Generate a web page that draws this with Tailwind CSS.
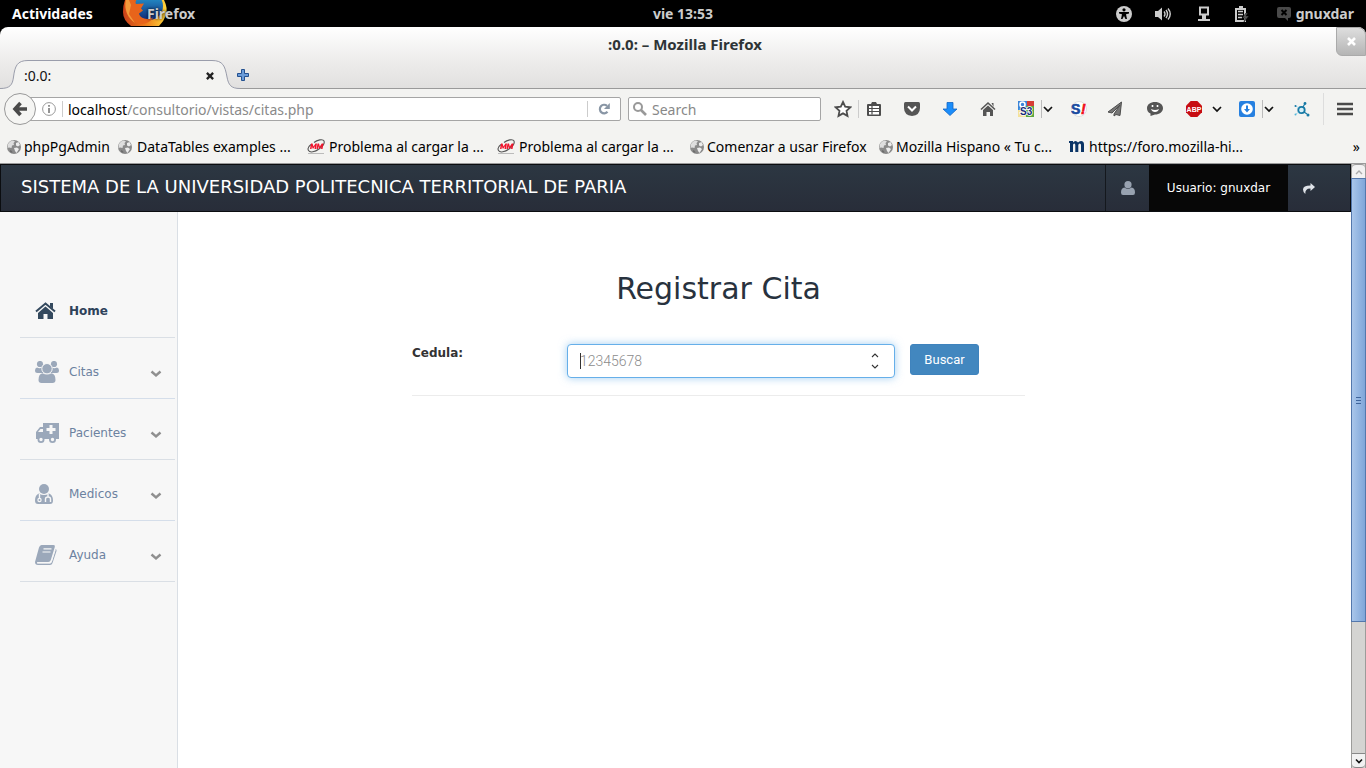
<!DOCTYPE html>
<html lang="es">
<head>
<meta charset="utf-8">
<meta name="viewport" content="width=device-width, initial-scale=1">
<title>:0.0:</title>
<script src="https://cdn.jsdelivr.net/npm/@tailwindcss/browser@4"></script>
</head>
<body class="flex h-screen flex-col overflow-hidden bg-black font-['Noto_Sans',sans-serif]">

<!-- Shared symbols -->
<svg class="hidden" aria-hidden="true">
  <symbol id="globe" viewBox="0 0 16 16"><circle cx="8" cy="8" r="7" fill="#8a8a8a"/><path d="M2 5 4 2.500 7 1.500l2 1L7.500 4 8 6 6 6.500 5.500 9 3 8.500 1.500 9Z" fill="#dedede"/><path d="m10 4 2.500-1 1.500 3-2 1.500-2-1ZM8 9l3-.5L13 10l-2.500 4L9 12Z" fill="#ececec"/><path d="M4 11l2 1 .5 2L4 13Z" fill="#6d6d6d"/></symbol>
  <symbol id="mm" viewBox="0 0 18 16"><path d="M7 3.500c3-2.500 9-4 10-1.500s-1 5-5 8-9 4-10.500 1.500S2 7 4 5.500" fill="none" stroke="#555" stroke-width="1.100"/><path d="m3 10 1-5.500h1.500l1 3 2-3H10L9 10H7.500L8 7 6.500 9.500h-1L5 7l-.5 3ZM9.500 10l1-5.500H12l.8 3 2-3h1.700l-1 5.500H14l.6-3-1.600 2.500h-1L11.500 7 11 10Z" fill="#f0142c"/><path d="M1 14.500h16" stroke="#bbb"/></symbol>
  <symbol id="chev" viewBox="0 0 10 10"><path d="m1 3 4 4 4-4" fill="none" stroke="currentColor" stroke-width="1.700"/></symbol>
  <symbol id="menuchev" viewBox="0 0 12 10"><path d="m1.500 2.500 4.500 4 4.500-4" fill="none" stroke="#8f8f8f" stroke-width="2.400"/></symbol>
</svg>

<!-- Desktop panel -->
<header class="grid h-[27px] shrink-0 grid-cols-[1fr_auto_1fr] items-center overflow-hidden bg-black text-sm leading-[27px] font-bold text-[#ccc]">
  <div class="flex items-center">
    <button class="w-[122px] pl-3 text-left text-white">Actividades</button>
    <div class="relative flex h-[27px] items-center overflow-hidden">
      <svg class="h-[27px] w-[46px]" viewBox="0 0 46 27" aria-hidden="true">
        <defs>
          <linearGradient id="fx" x1="0" y1="0" x2="1" y2="0"><stop offset="0" stop-color="#c9401a"/><stop offset=".5" stop-color="#ee7a1c"/><stop offset="1" stop-color="#ffd83a"/></linearGradient>
          <linearGradient id="gl" x1="0" y1="0" x2="0" y2="1"><stop offset="0" stop-color="#27a7dc"/><stop offset="1" stop-color="#122a78"/></linearGradient>
        </defs>
        <path d="M0 0h46v26H0Z" fill="#000"/>
        <path d="M3 0h39q4 8 2 15-2 6-7 11H9Q1 20 1 12 1 5 3 0Z" fill="url(#fx)"/>
        <circle cx="27" cy="6" r="14" fill="url(#gl)"/>
        <path d="M3 0h9l2 4 8-.5-3 5 2 2-4 3c1 5 8 7 14 4-3 6-11 8-17 5C5 19 2 9 3 0Z" fill="#e8641b"/>
        <path d="M7 0 9 5l-2 9 6 9C6 18 2 10 4 0Z" fill="#f39a3b"/>
      </svg>
      <span class="absolute left-[25px] [text-shadow:0_0_3px_#000]">Firefox</span>
      <span class="w-8"></span>
    </div>
  </div>
  <span>vie 13:53</span>
  <div class="flex items-center justify-end pr-3">
    <svg class="mr-[23px] size-4" viewBox="0 0 16 16" role="img" aria-label="Accesibilidad"><circle cx="8" cy="8" r="8" fill="#ccc"/><circle cx="8" cy="3.800" r="1.600" fill="#000"/><path d="M3 6h10v1.500l-3 .8L11 13H9.500L8 10 6.500 13H5l1-4.700-3-.8Z" fill="#000"/></svg>
    <svg class="mr-[27px] h-4 w-4" viewBox="0 0 16 16" role="img" aria-label="Volumen"><path d="M0 5h3l4-3.500v13L3 11H0Z" fill="#ccc"/><path d="M9 5.500q2 2.500 0 5M11 4q3 4 0 8M13 2.500q4.500 5.500 0 11" fill="none" stroke="#ccc" stroke-width="1.400"/></svg>
    <svg class="mr-[25px] h-4 w-3" viewBox="0 0 12 16" role="img" aria-label="Red"><path d="M2 1.500h8v7H2Z" fill="none" stroke="#ccc" stroke-width="2"/><path d="M4 9h4v4h4v2H0v-2h4Z" fill="#ccc"/></svg>
    <svg class="mr-7 h-4 w-[14px]" viewBox="0 0 14 16" role="img" aria-label="Batería"><path d="M1 3h9v12H1ZM4 1h3v2" fill="none" stroke="#ccc" stroke-width="2"/><path d="M3 5.500h5M3 8.500h5M3 11.500h4" stroke="#ccc" stroke-width="1.500"/><path d="m11 7-4 5h3l-1 4 5-6h-3l2-3Z" fill="#555" stroke="#000" stroke-width=".5"/></svg>
    <svg class="mr-[5px] h-[14px] w-[14px]" viewBox="0 0 14 14" aria-hidden="true"><path d="M2 0h10q2 0 2 2v7q0 2-2 2h-1v3l-3-3H2Q0 11 0 9V2Q0 0 2 0Z" fill="#4a4a4a"/><path d="m4.500 3 5 5m0-5-5 5" stroke="#000" stroke-width="2"/></svg>
    <span>gnuxdar</span>
  </div>
</header>

<!-- Window title and tabs -->
<section class="relative h-[62px] shrink-0 rounded-t-lg border-b border-[#9a9a9a] bg-linear-to-b from-white via-[#efeeed] to-[#e1e0df]">
  <h1 class="pt-2 pl-1 text-center text-[15px] leading-[18px] font-bold text-[#2e3436]">:0.0: – Mozilla Firefox</h1>
  <button aria-label="Cerrar ventana" class="absolute top-0 right-0 flex h-[29px] w-[30px] items-center justify-center rounded-tr-lg rounded-bl-md border border-[#aaa] bg-linear-to-b from-[#dedede] to-[#b5b5b5]">
    <svg class="size-[9px]" viewBox="0 0 9 9"><path d="m1 1 7 7m0-7-7 7" stroke="#fff" stroke-width="2.600"/></svg>
  </button>
  <div class="absolute -bottom-px left-0 h-[30px] w-[240px]">
    <svg class="absolute inset-0 h-[30px] w-[240px]" viewBox="0 0 240 30" aria-hidden="true"><path d="M0 29.500C10 29.500 12.500 26 13.500 18 15 7 17 1.500 28 1.500H212c11 0 13 5.500 15 16.500 1.500 8 4 11.500 13 11.500V30H0Z" fill="#f3f3f1"/><path d="M0 29.500C10 29.500 12.500 26 13.500 18 15 7 17 1.500 28 1.500H212c11 0 13 5.500 15 16.500 1.500 8 4 11.500 13 11.500" fill="none" stroke="#9a9dab"/></svg>
    <div class="relative flex h-[30px] items-center justify-between pt-1 pr-[26px] pl-6 text-sm text-[#111]">
      <span>:0.0:</span>
      <button aria-label="Cerrar pestaña"><svg class="size-2" viewBox="0 0 9 9"><path d="m1 1 7 7m0-7-7 7" stroke="#222" stroke-width="2.600"/></svg></button>
    </div>
  </div>
  <button aria-label="Nueva pestaña" class="absolute top-[42px] left-[237px]"><svg class="size-3" viewBox="0 0 12 12"><path d="M4.500.5h3v4h4v3h-4v4h-3v-4h-4v-3h4Z" fill="#6a9bd8" stroke="#24508f"/></svg></button>
</section>

<!-- Navigation toolbar -->
<nav class="flex h-10 shrink-0 items-center bg-[#f3f3f1] px-1 text-sm">
  <button aria-label="Atrás" class="z-10 flex size-8 shrink-0 items-center justify-center rounded-full border border-[#999] bg-[#f5f5f3]"><svg class="h-4 w-4" viewBox="0 0 16 16"><path d="M8.500 2 3 8l5.500 6M3.500 8H15" fill="none" stroke="#4a4a4a" stroke-width="3.600"/></svg></button>
  <div class="-ml-2 flex h-6 w-[593px] shrink items-center rounded-r-xs border border-[#a5a5a5] bg-white pl-[13px]">
    <svg class="size-[14px] shrink-0" viewBox="0 0 14 14" aria-hidden="true"><circle cx="7" cy="7" r="6.400" fill="none" stroke="#999"/><path d="M7 6v5M7 3v1.800" stroke="#888" stroke-width="1.800"/></svg>
    <span class="mr-[5px] ml-1.5 h-4 w-px bg-[#ccc]"></span>
    <span class="grow pt-0.5 text-[#8a8a8a]"><span class="text-black">localhost</span>/consultorio/vistas/citas.php</span>
    <button aria-label="Recargar" class="flex h-4 w-[33px] items-center justify-center border-l border-[#ccc]"><svg class="size-3" viewBox="0 0 12 12"><path d="M9.500 8.800A4.300 4.300 0 1 1 9 2.800" fill="none" stroke="#8996a5" stroke-width="2.200"/><path d="M11.800 0v6H6Z" fill="#8996a5"/></svg></button>
  </div>
  <label class="ml-[7px] flex h-6 w-[193px] items-center rounded-xs border border-[#a5a5a5] bg-white pl-1">
    <svg class="mr-[5px] size-[14px] shrink-0" viewBox="0 0 14 14"><circle cx="5" cy="5" r="4" fill="none" stroke="#999" stroke-width="2"/><path d="m8 8 5 5" stroke="#999" stroke-width="2.600"/></svg>
    <input type="text" aria-label="Buscar en la web" placeholder="Search" class="w-full min-w-0 bg-transparent pt-0.5 outline-none placeholder:text-[#888]">
  </label>
  <div class="ml-[13px] flex grow items-center text-[#111]">
    <button aria-label="Marcador"><svg class="size-[18px]" viewBox="0 0 18 18"><path d="m9 2 2.200 4.700 5.100.6-3.800 3.500 1 5.100L9 13.400l-4.500 2.500 1-5.100L1.700 7.300l5.100-.6Z" fill="#fff" stroke="#4d4d4d" stroke-width="1.800"/></svg></button>
    <span class="mr-[7px] ml-1.5 h-[18px] w-px bg-[#ccc]"></span>
    <button aria-label="Biblioteca"><svg class="h-4 w-4" viewBox="0 0 16 16"><path d="M2 3h3l1-2h4l1 2h3q1 0 1 1v10q0 1-1 1H2q-1 0-1-1V4q0-1 1-1Z" fill="#4d4d4d"/><path d="M3 5h10v8.500H3Z" fill="#fff"/><path d="M3 7.500h10M3 10.500h10M6 5v8.500" stroke="#4d4d4d" stroke-width="1.200"/></svg></button>
    <button aria-label="Pocket" class="ml-[22px]"><svg class="h-4 w-4" viewBox="0 0 16 16"><path d="M1.500 1h13Q16 1 16 2.500V7q0 7-8 8Q0 14 0 7V2.500Q0 1 1.500 1Z" fill="#555"/><path d="m4 5.500 4 4 4-4" fill="none" stroke="#fff" stroke-width="2"/></svg></button>
    <button aria-label="Descargas" class="ml-[22px]"><svg class="h-4 w-4" viewBox="0 0 16 16"><path d="M5 1.500h6V8h4l-7 6.500L1 8h4Z" fill="#1b8dfa" stroke="#1264c4" stroke-width=".8"/></svg></button>
    <button aria-label="Inicio" class="ml-[22px]"><svg class="h-4 w-4" viewBox="0 0 16 16"><path d="m1 8.500 7-6.500 7 6.500" fill="none" stroke="#555" stroke-width="1.600"/><path d="M8 4.500 13 9v6h-3v-4H6.500v4H3V9ZM11.500 2h2v4Z" fill="#555"/></svg></button>
    <button aria-label="Búsqueda S3" class="ml-[22px]"><svg class="h-4 w-4 overflow-visible" viewBox="0 0 16 16"><path d="M0 0h9v9H0Z" fill="#3a84d8"/><path d="M9 0h7v5H9Z" fill="#d63c35"/><path d="M8 5h8v11H8Z" fill="#58a641"/><path d="M0 9h8v7H0Z" fill="#f4e29a"/><circle cx="4.500" cy="3.500" r="2.500" fill="#3a84d8" stroke="#fff" stroke-width="1.600"/><text x="2" y="14" font-size="10" font-weight="bold" fill="#172c78" stroke="#fff" stroke-width="1.500" paint-order="stroke" font-family="Liberation Sans">S3</text></svg></button>
    <button aria-label="Opciones S3" class="ml-[7px] flex h-[18px] items-center border-l border-[#bbb] pl-px"><svg class="size-[10px]"><use href="#chev"/></svg></button>
    <button aria-label="Stylish" class="ml-[18px]"><svg class="h-4 w-4" viewBox="0 0 16 16"><circle cx="8" cy="8" r="7.500" fill="#fff" stroke="#ddd"/><text x="0" y="13" font-size="14" font-weight="bold" fill="#194a9f" stroke="#194a9f" stroke-width=".6" font-family="Liberation Sans">S</text><text x="10" y="13" font-size="14" font-weight="bold" font-style="italic" fill="#f00f1a" stroke="#f00f1a" stroke-width=".6" font-family="Liberation Sans">!</text></svg></button>
    <button aria-label="Enviar" class="ml-5"><svg class="h-4 w-4" viewBox="0 0 16 16"><path d="M14.500 1 1 11l4 1L13 4l-6 9v2l2-1.500 4 1Z" fill="#777" stroke="#4d4d4d"/></svg></button>
    <button aria-label="Hello" class="ml-6"><svg class="h-4 w-4" viewBox="0 0 16 16"><path d="M8 1c4.500 0 8 2.500 8 6.200S12.500 13.500 8 13.500L3.500 15v-2.500Q0 11 0 7.200C0 3.500 3.500 1 8 1Z" fill="#555"/><path d="M5.500 4v2M10.500 4v2" stroke="#fff" stroke-width="1.600"/><path d="M4 8q4 2 8 0-1 3-4 3T4 8Z" fill="#fff"/></svg></button>
    <button aria-label="Adblock Plus" class="ml-[23px]"><svg class="h-4 w-4" viewBox="0 0 16 16"><path d="M4.700 0h6.600L16 4.700v6.600L11.300 16H4.700L0 11.300V4.700Z" fill="#c70d12"/><text x="8" y="10.800" text-anchor="middle" font-size="7" font-weight="bold" fill="#fff" font-family="Liberation Sans">ABP</text></svg></button>
    <button aria-label="Opciones Adblock" class="ml-2.5"><svg class="size-[10px]"><use href="#chev"/></svg></button>
    <button aria-label="Descargar vídeo" class="ml-[17px]"><svg class="h-4 w-4" viewBox="0 0 16 16"><rect width="16" height="16" rx="2" fill="#2680e0"/><circle cx="8" cy="8" r="5.800" fill="#fff"/><path d="M7 4.500h2V8h2l-3 3.500L5 8h2Z" fill="#2680e0"/></svg></button>
    <button aria-label="Opciones de descarga" class="ml-[7px] flex h-[18px] items-center border-l border-[#bbb] pl-px"><svg class="size-[10px]"><use href="#chev"/></svg></button>
    <button aria-label="Complemento" class="ml-5"><svg class="h-4 w-4" viewBox="0 0 16 16"><circle cx="7.500" cy="9" r="3.200" fill="#d8f0f8" stroke="#1779a5" stroke-width="1.800"/><path d="m9 6 2-3.500M10 11l3 2" stroke="#1779a5" stroke-width="1.200"/><path d="M5 11l-3 2M5 7 2 5" stroke="#52b6da" stroke-dasharray="1 1"/><circle cx="11" cy="2.500" r="1.400" fill="#1779a5"/><circle cx="14" cy="14" r="1.500" fill="#1779a5"/><circle cx="1.500" cy="5" r="1" fill="#1779a5"/><circle cx="1.500" cy="13.500" r="1" fill="#52b6da"/></svg></button>
    <button aria-label="Menú" class="ml-[13px] flex h-8 items-center border-l border-[#ddd] pl-[13px]"><svg class="h-4 w-4" viewBox="0 0 16 16"><path d="M0 3h16M0 8h16M0 13h16" stroke="#4a4a4a" stroke-width="2.600"/></svg></button>
  </div>
</nav>

<!-- Bookmarks -->
<nav class="flex h-[35px] shrink-0 items-center overflow-hidden border-b border-[#9a9a9a] bg-[#f3f3f1] pt-px pl-1.5 text-sm whitespace-nowrap text-black">
  <a href="#" class="flex w-[111px] items-center gap-0.5"><svg class="size-4 shrink-0"><use href="#globe"/></svg>phpPgAdmin</a>
  <a href="#" class="flex w-[190px] items-center gap-1"><svg class="size-4 shrink-0"><use href="#globe"/></svg>DataTables examples ...</a>
  <a href="#" class="flex w-[190px] items-center gap-1"><svg class="h-4 w-[18px] shrink-0"><use href="#mm"/></svg>Problema al cargar la ...</a>
  <a href="#" class="flex w-[192px] items-center gap-1"><svg class="h-4 w-[18px] shrink-0"><use href="#mm"/></svg>Problema al cargar la ...</a>
  <a href="#" class="flex w-[189px] items-center gap-0.5"><svg class="size-4 shrink-0"><use href="#globe"/></svg>Comenzar a usar Firefox</a>
  <a href="#" class="flex w-[191px] items-center gap-0.5"><svg class="size-4 shrink-0"><use href="#globe"/></svg>Mozilla Hispano « Tu c...</a>
  <a href="#" class="flex items-center gap-1"><svg class="size-4 shrink-0" viewBox="0 0 16 16"><path d="M0 2h4v1.500Q5 2 6.500 2T9 3.500Q10.200 2 12 2q3 0 3 3.500V13h-3V6q0-1.500-1.200-1.500T9.300 6v7h-3V6q0-1.500-1.100-1.500T4 6v7H1V4H0Z" fill="#0b3567"/></svg>https://foro.mozilla-hi...</a>
  <button aria-label="Más marcadores" class="mr-1.5 ml-auto">»</button>
</nav>

<!-- Page viewport -->
<div class="flex min-h-0 grow bg-white font-['DejaVu_Sans',sans-serif]">
  <div class="flex min-w-0 grow flex-col">
    <header class="flex h-12 shrink-0 border border-[#0b0d10] bg-linear-to-b from-[#2c3742] to-[#282d39] text-white">
      <a href="#" class="grow pl-5 text-lg leading-[44px]">SISTEMA DE LA UNIVERSIDAD POLITECNICA TERRITORIAL DE PARIA</a>
      <a href="#" aria-label="Perfil" class="flex w-11 items-center justify-center border-l border-[#14181d]"><svg class="size-[14px]" viewBox="0 0 14 14"><circle cx="7" cy="3.700" r="3.600" fill="#98a2b0"/><path d="M3.500 6.500Q7 9 10.500 6.500 14 7 14 11.500 14 14 12 14H2Q0 14 0 11.500 0 7 3.500 6.500Z" fill="#98a2b0"/></svg></a>
      <a href="#" class="flex w-[139px] items-center justify-center bg-[#070707] text-xs">Usuario: gnuxdar</a>
      <a href="#" aria-label="Salir" class="flex w-[62px] items-center pl-[15px]"><svg class="h-[11px] w-3" viewBox="0 0 12 11"><path d="M7.500 0 12 4 7.500 8V5.500Q2 5.300 2.300 11 0 9 0 6.500 0 2.500 7.500 2.500Z" fill="#dfe3e8"/></svg></a>
    </header>
    <div class="flex min-h-0 grow">
      <aside class="w-[178px] shrink-0 border-r border-[#dadfe5] bg-[#f7f7f7] pt-[72px] pr-0.5 pl-5 text-xs text-[#6c82a0]">
        <ul>
          <li class="border-b border-[#dadfe5]"><a href="#" class="flex h-[53px] items-center pl-[15px] font-bold text-[#2e425a]"><svg class="mr-[13px] h-[18px] w-[21px]" viewBox="0 0 21 18"><path d="M1 9.500 10.500 1.500 20 9.500" fill="none" stroke="#34495e" stroke-width="2"/><path d="M15 1h3v6l-3-2.500ZM10.500 4.500 18 11v6h-5.500v-5h-4v5H3v-6Z" fill="#34495e"/></svg>Home</a></li>
          <li class="border-b border-[#d5deea]"><a href="#" class="flex h-15 items-center pt-2 pl-[15px]"><svg class="mr-2.5 h-[22px] w-6" viewBox="0 0 24 22"><g fill="#9ba8ba"><circle cx="5" cy="3" r="3.100"/><circle cx="19" cy="3" r="3.100"/><path d="M2 6.500Q5 8 7 6.300 6.500 9.500 8.500 12H2.500Q0 12 0 9.500T2 6.500ZM22 6.500Q19 8 17 6.300 17.500 9.500 15.500 12h6Q24 12 24 9.500T22 6.500Z"/><circle cx="12" cy="7.700" r="5.200" stroke="#f7f7f7"/><path d="M7.500 12.300q4.500 2.500 9 0 4 .7 4 6.700 0 3-3 3h-11q-3 0-3-3 0-6 4-6.700Z"/></g></svg>Citas<svg class="mt-1 mr-[13px] ml-auto h-2.5 w-3"><use href="#menuchev"/></svg></a></li>
          <li class="border-b border-[#dadfe5]"><a href="#" class="flex h-15 items-center pt-2 pl-[15px]"><svg class="mr-2.5 h-5 w-6" viewBox="0 0 24 20"><path d="M8 0h16v16H1V9l4-5h3Z" fill="#9ba8ba"/><path d="M3 9h5V6H5.500Z" fill="#f7f7f7"/><path d="M14.500 2h3v3h3v3h-3v3h-3V8h-3V5h3Z" fill="#f7f7f7"/><circle cx="6" cy="16.500" r="2.600" fill="#f7f7f7" stroke="#9ba8ba" stroke-width="1.800"/><circle cx="17.500" cy="16.500" r="2.600" fill="#f7f7f7" stroke="#9ba8ba" stroke-width="1.800"/></svg>Pacientes<svg class="mt-1 mr-[13px] ml-auto h-2.5 w-3"><use href="#menuchev"/></svg></a></li>
          <li class="border-b border-[#d5deea]"><a href="#" class="flex h-15 items-center pt-2 pl-[15px]"><svg class="mr-4 h-5 w-[18px]" viewBox="0 0 18 20"><circle cx="9" cy="5" r="5" fill="#9ba8ba"/><path d="M4 9.500q5 3 10 0 4 1.500 4 7 0 3.500-3 3.500H3q-3 0-3-3.500 0-5.500 4-7Z" fill="#9ba8ba"/><path d="M4.500 10v4.500M10.500 18v-3q0-2 2.500-2t2.500 2v3M13 10v3" fill="none" stroke="#f7f7f7" stroke-width="1.400"/><circle cx="4.500" cy="16" r="1.600" fill="none" stroke="#f7f7f7" stroke-width="1.200"/></svg>Medicos<svg class="mt-1 mr-[13px] ml-auto h-2.5 w-3"><use href="#menuchev"/></svg></a></li>
          <li class="border-b border-[#dadfe5]"><a href="#" class="flex h-15 items-center pt-2 pl-[15px]"><svg class="mr-3 h-5 w-[22px]" viewBox="0 0 22 20"><path d="M6.500 0h12q2 0 1.300 2l-4 13q-.6 2-2.500 2H3.500q-1.500 0-1.500.8t1.200.7H15q1 0 1.500-1L20.500 4q1.500.5 1 2l-4 12q-.6 2-2.500 2H3q-3 0-3-3L4 2.500Q4.800 0 6.500 0Z" fill="#9ba8ba"/><path d="M8.500 3.800h8M7.500 7h8" stroke="#f7f7f7" stroke-width="1.200"/><path d="M2 17.800h13q1 0 1.500-1.200l3.800-12" fill="none" stroke="#f7f7f7"/></svg>Ayuda<svg class="mt-1 mr-[13px] ml-auto h-2.5 w-3"><use href="#menuchev"/></svg></a></li>
        </ul>
      </aside>
      <main class="min-w-0 grow pt-[57px] pl-[234px]">
        <form class="w-full max-w-[613px] border-b border-[#ececec] pb-[17px]" onsubmit="return false">
          <h2 class="mb-[35px] text-center text-[30px] leading-10 text-[#28323e]">Registrar Cita</h2>
          <div class="flex items-start">
            <label for="cedula" class="w-[155px] shrink-0 text-xs leading-[18px] font-bold text-[#333]">Cedula:</label>
            <div class="relative grow">
              <input id="cedula" type="text" inputmode="numeric" placeholder="12345678" class="block h-[34px] w-full rounded border border-[#66afe9] bg-white px-3 font-[Roboto,sans-serif] text-sm font-light shadow-[0_0_8px_rgba(102,175,233,0.6)] outline-none placeholder:text-[#8c8c8c]">
              <span class="absolute top-[9px] left-[13px] h-4 w-px bg-[#333]"></span>
              <svg class="absolute top-[9px] right-4 h-4 w-2" viewBox="0 0 8 16" aria-hidden="true"><path d="m1 4 3-3 3 3M1 12l3 3 3-3" fill="none" stroke="#333" stroke-width="1.100"/></svg>
            </div>
            <button class="mr-[46px] ml-[15px] h-[31px] w-[69px] rounded-[3px] border border-[#3f83bd] bg-[#4287bf] font-[Roboto,sans-serif] text-[13px] text-white">Buscar</button>
          </div>
        </form>
      </main>
    </div>
  </div>
  <!-- Scrollbar -->
  <div class="flex w-[15px] shrink-0 flex-col border-x border-[#9c9c9a] bg-[#d4d4d2]" aria-hidden="true">
    <div class="flex h-[14px] items-center justify-center rounded-t-sm border-t border-[#999] bg-[#f2f2f2]"><svg class="size-2" viewBox="0 0 8 8"><path d="m1 6 3-3 3 3" fill="none" stroke="#aaa" stroke-width="1.400"/></svg></div>
    <div class="-mx-px flex h-[444px] flex-col items-center justify-center gap-0.5 border border-[#5478ac] bg-linear-to-r from-[#a9c6ea] to-[#7fa6d9]"><span class="h-px w-[5px] bg-[#3f659c]"></span><span class="h-px w-[5px] bg-[#3f659c]"></span><span class="h-px w-[5px] bg-[#3f659c]"></span></div>
    <div class="mt-auto flex h-[15px] items-center justify-center rounded-b-sm border-y border-[#888] bg-[#f2f2f2]"><svg class="size-2" viewBox="0 0 8 8"><path d="m1 2.500 3 3 3-3" fill="none" stroke="#111" stroke-width="1.600"/></svg></div>
  </div>
</div>
</body>
</html>
